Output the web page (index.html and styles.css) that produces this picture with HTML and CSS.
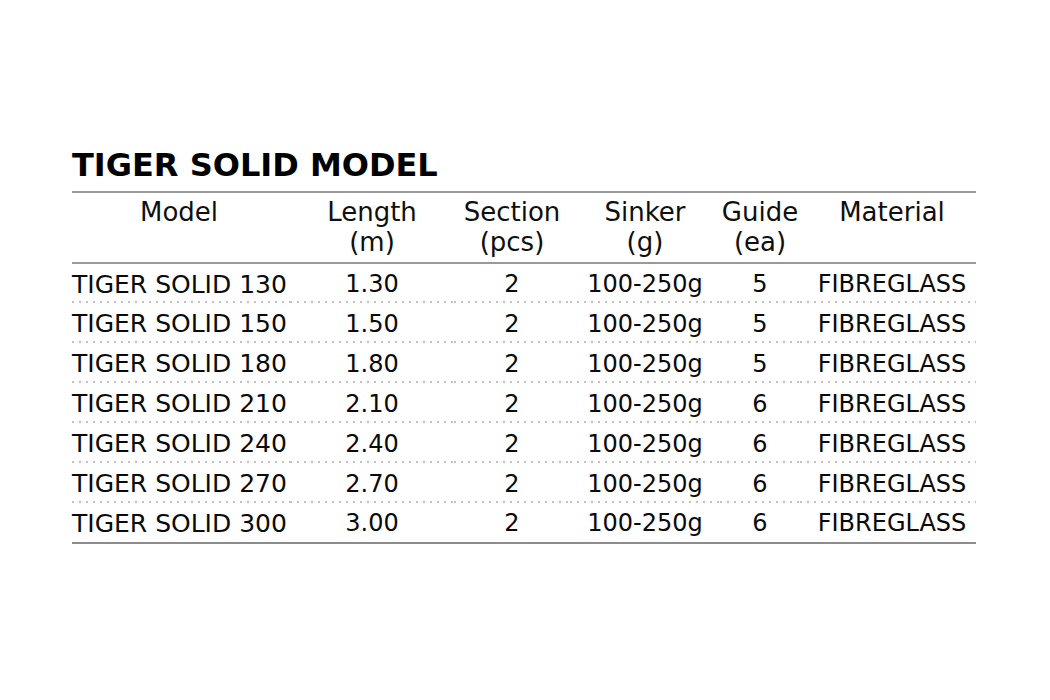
FILE: index.html
```html
<!DOCTYPE html>
<html lang="en">
<head>
<meta charset="utf-8">
<title>Tiger Solid Model</title>
<link rel="stylesheet" href="styles.css">
</head>
<body>
<main class="sheet">
  <h1 class="title">TIGER SOLID MODEL</h1>
  <table class="spec">
    <colgroup>
      <col class="c-model"><col class="c-length"><col class="c-section"><col class="c-sinker"><col class="c-guide"><col class="c-material">
    </colgroup>
    <thead>
      <tr>
        <th class="first">Model</th>
        <th>Length<br>(m)</th>
        <th>Section<br>(pcs)</th>
        <th>Sinker<br>(g)</th>
        <th>Guide<br>(ea)</th>
        <th class="mat">Material</th>
      </tr>
    </thead>
    <tbody>
      <tr><td class="first">TIGER SOLID 130</td><td>1.30</td><td>2</td><td>100-250g</td><td>5</td><td class="mat">FIBREGLASS</td></tr>
      <tr><td class="first">TIGER SOLID 150</td><td>1.50</td><td>2</td><td>100-250g</td><td>5</td><td class="mat">FIBREGLASS</td></tr>
      <tr><td class="first">TIGER SOLID 180</td><td>1.80</td><td>2</td><td>100-250g</td><td>5</td><td class="mat">FIBREGLASS</td></tr>
      <tr><td class="first">TIGER SOLID 210</td><td>2.10</td><td>2</td><td>100-250g</td><td>6</td><td class="mat">FIBREGLASS</td></tr>
      <tr><td class="first">TIGER SOLID 240</td><td>2.40</td><td>2</td><td>100-250g</td><td>6</td><td class="mat">FIBREGLASS</td></tr>
      <tr><td class="first">TIGER SOLID 270</td><td>2.70</td><td>2</td><td>100-250g</td><td>6</td><td class="mat">FIBREGLASS</td></tr>
      <tr class="last"><td class="first">TIGER SOLID 300</td><td>3.00</td><td>2</td><td>100-250g</td><td>6</td><td class="mat">FIBREGLASS</td></tr>
    </tbody>
  </table>
</main>
</body>
</html>
```
FILE: styles.css
```css
html, body {
  margin: 0;
  padding: 0;
  background: #ffffff;
}

body {
  font-family: "DejaVu Sans", Verdana, sans-serif;
  color: #0a0a0a;
}

.sheet {
  padding: 147px 0 0 72px;
}

.title {
  margin: 0 0 8px 0;
  font-size: 32px;
  line-height: 36px;
  font-weight: bold;
  color: #000000;
}

.spec {
  width: 904px;
  border-collapse: collapse;
  table-layout: fixed;
}

.c-model { width: 218px; }
.c-length { width: 164px; }
.c-section { width: 116px; }
.c-sinker { width: 150px; }
.c-guide { width: 80px; }
.c-material { width: 176px; }

.spec th {
  font-weight: normal;
  font-size: 26px;
  line-height: 30px;
  padding: 4px 0 5px 0;
  text-align: center;
  vertical-align: top;
  border-top: 2px solid #9a9a9a;
  border-bottom: 2px solid #9a9a9a;
  color: #0f0f0f;
  white-space: nowrap;
}

.spec th.first {
  padding-right: 4px;
}

.spec td {
  font-size: 24px;
  height: 40px;
  padding: 1px 0 0 0;
  text-align: center;
  vertical-align: middle;
  white-space: nowrap;
  background-image: linear-gradient(to right, #c2c2c2 2px, transparent 2px);
  background-size: 7px 2px;
  background-repeat: repeat-x;
  background-position: left bottom;
  box-sizing: border-box;
}

.spec td.first {
  text-align: left;
  font-size: 25px;
}

.spec td.mat,
.spec th.mat {
  padding-left: 8px;
}

.spec tr.last td {
  background-image: none;
  border-bottom: 2px solid #8c8c8c;
}
```
